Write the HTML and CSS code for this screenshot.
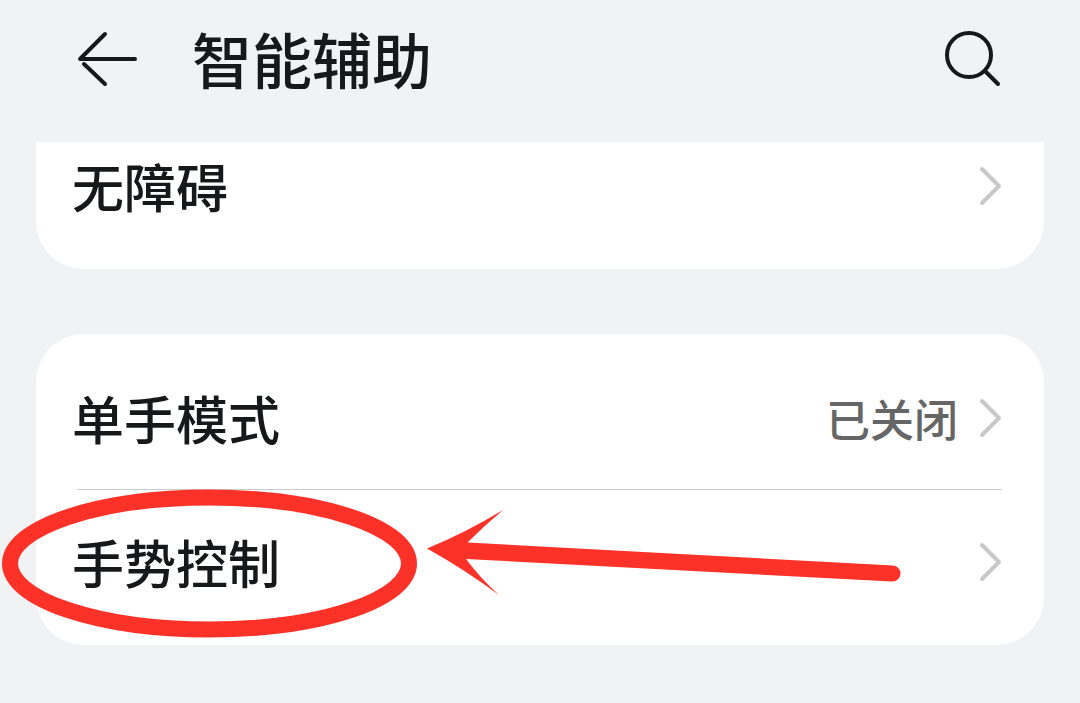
FILE: index.html
```html
<!DOCTYPE html>
<html lang="zh-CN">
<head>
<meta charset="utf-8">
<meta name="viewport" content="width=device-width, initial-scale=1">
<title>智能辅助</title>
<link rel="stylesheet" href="styles.css">
</head>
<body>
<header class="topbar">
  <button class="icon-button" type="button" aria-label="返回">
    <svg width="64" height="64" viewBox="0 0 64 64" fill="none" stroke="#17181a" stroke-width="4" stroke-linecap="round" stroke-linejoin="round"><path d="M59 33H4L29 8M8 38L29 58"/></svg>
  </button>
  <h1 class="title">智能辅助</h1>
  <button class="icon-button" type="button" aria-label="搜索">
    <svg width="64" height="64" viewBox="0 0 64 64" fill="none" stroke="#17181a" stroke-width="4" stroke-linecap="round"><circle cx="29" cy="29" r="22"/><path d="M45 45L58 58"/></svg>
  </button>
</header>
<main class="settings">
  <section class="card card-scrolled">
    <a class="row" href="#accessibility">
      <span class="label">无障碍</span>
      <svg class="chevron" width="24" height="42" viewBox="0 0 24 42"><path d="M4 4L21 21L4 38"/></svg>
    </a>
  </section>
  <section class="card">
    <a class="row" href="#one-hand">
      <span class="label">单手模式</span>
      <span class="value">已关闭</span>
      <svg class="chevron" width="24" height="42" viewBox="0 0 24 42"><path d="M4 4L21 21L4 38"/></svg>
    </a>
    <hr class="divider">
    <a class="row" href="#gestures">
      <span class="label">手势控制</span>
      <svg class="chevron" width="24" height="42" viewBox="0 0 24 42"><path d="M4 4L21 21L4 38"/></svg>
      <svg class="highlight" width="904" height="152" viewBox="0 0 904 152" aria-hidden="true">
        <ellipse cx="209.5" cy="75.5" rx="199.5" ry="66" fill="none" stroke="#fc3128" stroke-width="16"/>
        <path fill="#fc3128" d="M427 60.500Q465 45 503 22Q484 38 467.500 54.500L893 77.500A8 8 0 0 1 892 93.500L466 71Q481 91 499 107Q464 81 427 60.500Z"/>
      </svg>
    </a>
  </section>
</main>
</body>
</html>
```
FILE: styles.css
```css
* {
  box-sizing: border-box;
}

body {
  margin: 0;
  min-height: 100vh;
  background: #f1f2f4;
  color: #17181a;
  font-family: "Noto Sans CJK SC", sans-serif;
}

.topbar {
  display: flex;
  align-items: flex-start;
  padding: 16px 76px 42px;
}

.icon-button {
  display: flex;
  margin-top: 10px;
  padding: 0;
  border: 0;
  background: none;
  cursor: pointer;
}

.title {
  flex: 1;
  margin: 0 0 0 52px;
  font-size: 60px;
  font-weight: 500;
  line-height: 84px;
}

.settings {
  display: flex;
  flex-direction: column;
  gap: 65px;
  padding: 0 36px 58px;
  overflow: hidden;
}

.card {
  padding: 12px 42px 12px 36px;
  border-radius: 48px;
  background: #fff;
}

.card-scrolled {
  margin-top: -40px;
}

.row {
  position: relative;
  display: flex;
  align-items: center;
  gap: 20px;
  min-height: 143px;
  color: inherit;
  text-decoration: none;
}

.label {
  flex: 1;
  font-size: 52px;
  font-weight: 500;
  line-height: 72px;
}

.value {
  color: #666;
  font-size: 44px;
  font-weight: 500;
  line-height: 64px;
}

.chevron {
  flex: none;
  fill: none;
  stroke: #c8c8c8;
  stroke-width: 4;
  stroke-linecap: round;
  stroke-linejoin: round;
}

.divider {
  height: 1px;
  margin: 0 0 0 5px;
  border: 0;
  background: #cbcbcb;
}

.highlight {
  position: absolute;
  top: -2px;
  left: -72px;
  pointer-events: none;
}
```
